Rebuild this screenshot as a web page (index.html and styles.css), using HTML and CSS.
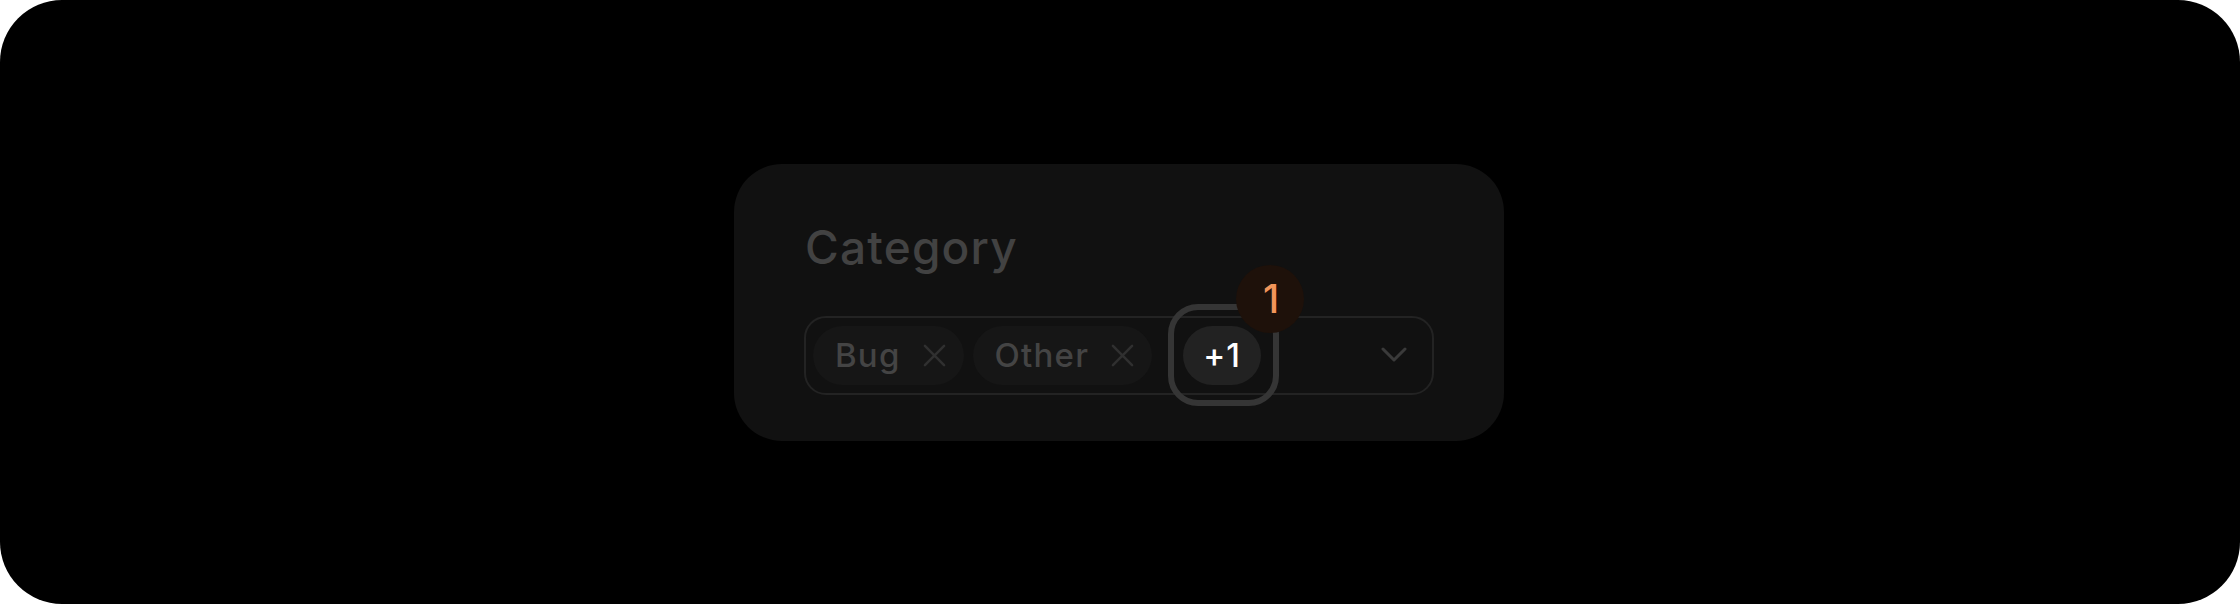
FILE: index.html
```html
<!DOCTYPE html>
<html lang="en">
<head>
<meta charset="utf-8">
<title>Category</title>
<link rel="stylesheet" href="styles.css">
</head>
<body>
<div class="frame">
  <div class="card">
    <div class="label">Category</div>
    <div class="select">
      <div class="chips">
        <span class="chip">
          <span class="chip-text">Bug</span>
          <svg class="x" viewBox="0 0 24 24" width="23" height="23"><path d="M2 2 L22 22 M22 2 L2 22"/></svg>
        </span>
        <span class="chip">
          <span class="chip-text">Other</span>
          <svg class="x" viewBox="0 0 24 24" width="23" height="23"><path d="M2 2 L22 22 M22 2 L2 22"/></svg>
        </span>
        <span class="more">
          <span class="ring"></span>
          <span class="more-text">+1</span>
          <span class="badge">1</span>
        </span>
      </div>
      <svg class="chevron" viewBox="0 0 26 16" width="26" height="16"><path d="M2 2 L13 13 L24 2"/></svg>
    </div>
  </div>
</div>
</body>
</html>
```

FILE: styles.css
```css
html, body {
  margin: 0;
  padding: 0;
  background: #ffffff;
}

.frame {
  width: 2240px;
  height: 604px;
  background: #000000;
  border-radius: 62px;
  display: flex;
  align-items: center;
  justify-content: center;
  font-family: "Inter", "Noto Sans", sans-serif;
}

.card {
  width: 770px;
  box-sizing: border-box;
  margin-left: -2px;
  background: #111111;
  border-radius: 48px;
  padding: 55px 70px 46px;
}

.label {
  font-size: 46px;
  line-height: 56px;
  letter-spacing: 1.2px;
  font-weight: 500;
  color: #424242;
  margin: 0 0 41px 1px;
}

.select {
  box-sizing: border-box;
  height: 79px;
  border: 2px solid #232323;
  border-radius: 22px;
  padding: 0 25px 0 7px;
  display: flex;
  align-items: center;
}

.chips {
  display: flex;
  align-items: center;
  gap: 9px;
}

.chip {
  height: 59px;
  box-sizing: border-box;
  padding: 0 18px 0 22px;
  border-radius: 30px;
  background: #161616;
  display: flex;
  align-items: center;
  gap: 22px;
}

.chip-text {
  font-size: 33px;
  letter-spacing: 1.2px;
  font-weight: 500;
  color: #444444;
  line-height: 40px;
}

.x path {
  fill: none;
  stroke: #303030;
  stroke-width: 2.6;
  stroke-linecap: round;
}

.more {
  position: relative;
  margin-left: 22px;
  width: 78px;
  height: 59px;
  border-radius: 30px;
  background: #222222;
  display: flex;
  align-items: center;
  justify-content: center;
}

.more-text {
  font-size: 33px;
  line-height: 40px;
  color: #ffffff;
  letter-spacing: 1px;
  font-weight: 500;
}

.ring {
  position: absolute;
  top: -22px;
  bottom: -21px;
  left: -15px;
  right: -18px;
  border: 6px solid #353535;
  border-radius: 30px;
}

.badge {
  position: absolute;
  left: 53px;
  top: -61px;
  width: 68px;
  height: 68px;
  border-radius: 50%;
  background: #1e110a;
  color: #f2955a;
  font-size: 39px;
  font-weight: 500;
  display: flex;
  align-items: center;
  justify-content: center;
  padding-left: 2px;
  box-sizing: border-box;
}

.chevron {
  margin-left: auto;
}

.chevron path {
  fill: none;
  stroke: #3a3a3a;
  stroke-width: 3;
  stroke-linecap: round;
  stroke-linejoin: round;
}
```
